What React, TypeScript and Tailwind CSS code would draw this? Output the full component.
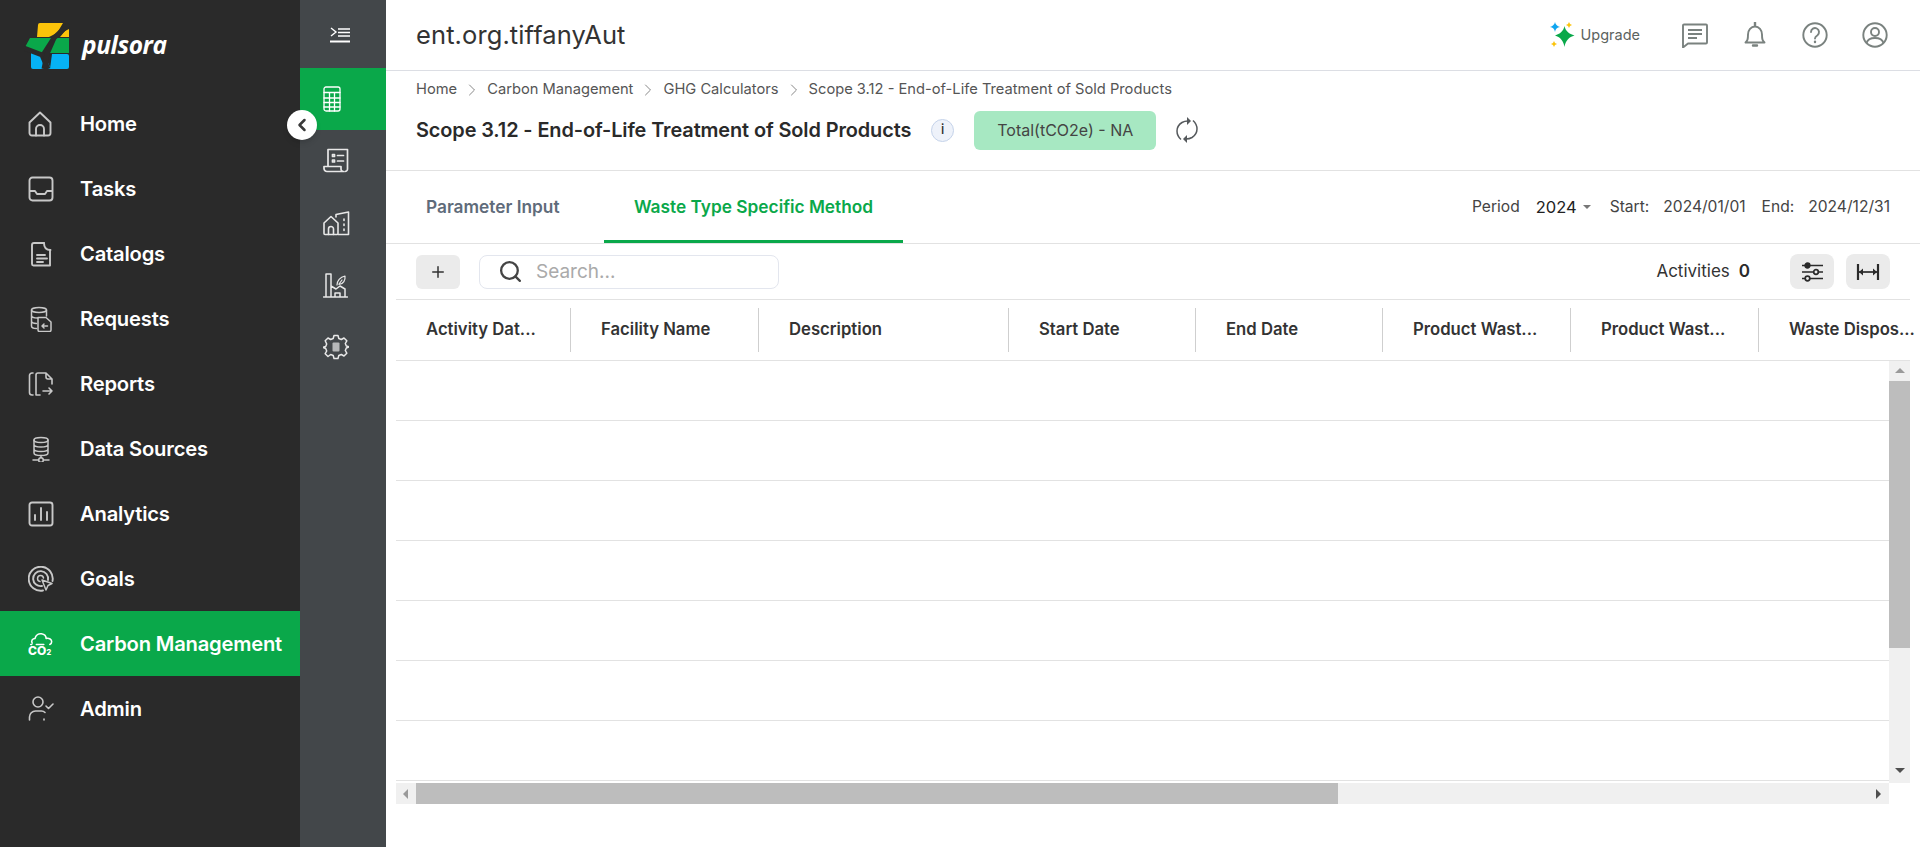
import React from 'react';
import { ChevronLeft, ChevronRight, Search, Plus } from 'lucide-react';

const S = { fill: 'none', stroke: 'currentColor', strokeWidth: 1.9, strokeLinecap: 'round', strokeLinejoin: 'round' } as const;

/* ─── Sidebar icons ─────────────────────────────────────── */
const HomeIcon = () => (
  <svg width="26" height="26" viewBox="0 0 26 26" {...S}>
    <path d="M1.500 11.500 12 1.500l10.500 10V22a2.500 2.500 0 0 1-2.500 2.500H4A2.500 2.500 0 0 1 1.500 22z" />
    <path d="M8 24.500V18a4 4 0 0 1 8 0v6.500" />
  </svg>
);
const InboxIcon = () => (
  <svg width="26" height="26" viewBox="0 0 26 26" {...S}>
    <rect x="1.500" y="1.500" width="23" height="23" rx="3" />
    <path d="M2 15h5l2 3h8l2-3h5" />
  </svg>
);
const FileIcon = () => (
  <svg width="26" height="26" viewBox="0 0 26 26" {...S}>
    <path d="M16 2H6a2 2 0 0 0-2 2v19a1.500 1.500 0 0 0 1.500 1.500H22M22 24.500V9z" />
    <path d="M16 2c0 4 2 7 6.500 7M9 14h8M9 17.500h10M9 21h6" />
  </svg>
);
const RequestIcon = () => (
  <svg width="26" height="26" viewBox="0 0 26 26" {...S} strokeWidth={1.500}>
    <ellipse cx="11" cy="4" rx="7.500" ry="2.500" />
    <path d="M3.500 4v16c0 1.500 2 2.500 5 2.500M18.500 4v6M3.500 9.500c0 1.500 3 2.500 6 2.500M3.500 15c0 1.500 2 2.300 5 2.500" />
    <path d="M10 11.500h8l5 4.500v8a1.500 1.500 0 0 1-1.500 1.500h-10A1.500 1.500 0 0 1 10 24z" />
    <path d="M19.500 20h-5M16 18l-2 2 2 2" />
  </svg>
);
const ReportIcon = () => (
  <svg width="26" height="26" viewBox="0 0 26 26" {...S} strokeWidth={1.600}>
    <path d="M5 2H4a2.500 2.500 0 0 0-2.500 2.500v17A2.500 2.500 0 0 0 4 24h1" />
    <path d="M8 24V4a2 2 0 0 1 2-2h8l6 6v5M18 2v4a2 2 0 0 0 2 2h4M8 24h4" />
    <path d="M15 20h9M21 17l3 3-3 3" />
  </svg>
);
const DatabaseIcon = () => (
  <svg width="26" height="26" viewBox="0 0 26 26" {...S} strokeWidth={1.500}>
    <ellipse cx="13" cy="4" rx="7" ry="2.500" />
    <path d="M6 4v13c0 1.500 3 2.500 7 2.500s7-1 7-2.500V4M6 8.500c0 1.500 3 2.500 7 2.500s7-1 7-2.500M6 13c0 1.500 3 2.500 7 2.500s7-1 7-2.500" />
    <path d="M13 19.500v2M5 24h5.500M15.500 24H21" />
    <circle cx="13" cy="24" r="2.300" />
  </svg>
);
const ChartIcon = () => (
  <svg width="26" height="26" viewBox="0 0 26 26" {...S}>
    <rect x="1.500" y="1.500" width="23" height="23" rx="2.500" />
    <path d="M7 19v-5M13 19V7M19 19v-8" />
  </svg>
);
const TargetIcon = () => (
  <svg width="26" height="26" viewBox="0 0 26 26" {...S}>
    <path d="M24.500 15A12 12 0 1 0 15 24.500" />
    <path d="M20 14a7.500 7.500 0 1 0-6 6" />
    <path d="M15.500 12a3 3 0 1 0-3.500 3.500" strokeWidth="1.500" />
    <path d="m14 14 10 3.500-4 2-2 4.500z" strokeWidth="1.500" />
  </svg>
);
const Co2Icon = () => (
  <svg width="28" height="26" viewBox="0 0 28 26" {...S} strokeWidth={1.700}>
    <path d="M4.500 12c-1.500-2.500.5-5 3-5 1-3.500 4-5.500 7-5 3 .5 5 2.500 5 5 3.500-.5 6 1 6 3.500 0 1.500-1 2.500-2 3" />
    <path d="M3 13.500h1M9 13.500h8" />
    <text x="0" y="25" fill="currentColor" stroke="none" fontSize="13" fontWeight="800" fontFamily="Inter, sans-serif">CO</text>
    <text x="20" y="25" fill="currentColor" stroke="none" fontSize="8" fontWeight="800" fontFamily="Inter, sans-serif">2</text>
  </svg>
);
const AdminIcon = () => (
  <svg width="26" height="26" viewBox="0 0 26 26" {...S} strokeWidth={1.600}>
    <circle cx="10" cy="6" r="5" />
    <path d="M1.500 24v-3a6 6 0 0 1 6-6h6a5 5 0 0 1 3.500 1.500M16 24v-1" />
    <path d="m18 10 2.500 2.500L25 8" />
  </svg>
);

/* ─── Rail icons ────────────────────────────────────────── */
const CalcIcon = () => (
  <svg width="18" height="26" viewBox="0 0 18 26" {...S} strokeWidth={1.300}>
    <rect x="1" y="1" width="16" height="24" rx="2" />
    <path d="M1 6.500h16M1 12h16M1 16.500h16M1 21h16M6.500 6.500V25M11.500 6.500V25" />
  </svg>
);
const LedgerIcon = () => (
  <svg width="26" height="26" viewBox="0 0 26 26" {...S} strokeWidth={1.700}>
    <path d="M5 18V1.500h19.500V21a2.500 2.500 0 0 1-2.500 2.500" />
    <path d="M1 18.500h17V21a2.500 2.500 0 0 0 2.500 2.500H4A3 3 0 0 1 1 20.500z" />
    <path d="M9.500 6.500h2v2h-2zM9.500 12h2v2h-2zM14.500 7.500h6M14.500 13h6" />
  </svg>
);
const BuildingIcon = () => (
  <svg width="27" height="25" viewBox="0 0 27 25" {...S} strokeWidth={1.600}>
    <path d="M1 12 8 5.500l7 6.500v10.500a1 1 0 0 1-1 1H2a1 1 0 0 1-1-1z" />
    <path d="M5.500 23.500V18a2.500 2.500 0 0 1 5 0v5.500" />
    <path d="M13 6V3.500L25.500 1v22.500H15" />
    <path d="M21 8v1.500M21 13v1.500M21 18v1.500" />
  </svg>
);
const FactoryIcon = () => (
  <svg width="25" height="25" viewBox="0 0 25 25" {...S} strokeWidth={1.500}>
    <path d="M3 23.500V1h5v22.500M0.500 24h24M8 13l5 3 4-3 5 3v8M12 24v-4h5v4" />
    <path d="M14 12c0-4 3-8 8-9 .5 4-1.500 8-6 8.500M16 11l3-4" strokeWidth="1.200" />
  </svg>
);
const GearIcon = () => (
  <svg width="26" height="26" viewBox="0 0 26 26" fill="none" stroke="currentColor" strokeWidth="1.500" strokeLinejoin="round">
    <path d="m11 1.500 4 0 .8 3 2.500 1 2.700-1.500 2.800 2.800-1.500 2.700 1 2.500 3 .8v0l-3 1.200-1 2.500 1.500 2.700-2.800 2.800-2.700-1.500-2.500 1-.8 3h-4l-.8-3-2.500-1L5 22.500l-2.800-2.800 1.500-2.700-1-2.500-3-1.200 3-.8 1-2.500L2.200 6.800 5 4l2.700 1.500 2.500-1z" />
    <rect x="9.500" y="8.500" width="7" height="9" rx="1" fill="currentColor" stroke="none" opacity="0.7" />
  </svg>
);
const CollapseIcon = () => (
  <svg width="20" height="16" viewBox="0 0 20 16" fill="none" stroke="currentColor" strokeWidth="1.800">
    <path d="M1 1l5 4-5 4" strokeWidth="1.400" />
    <path d="M8 2h12M8 5.500h12M8 9h12" strokeWidth="1.700" />
    <path d="M0 14.500h20" strokeWidth="2" />
  </svg>
);

/* ─── Header icons ──────────────────────────────────────── */
const SparkIcon = () => (
  <svg width="26" height="26" viewBox="0 0 26 26">
    <path d="M14.500 4 C15.500 9 19 12 24.500 13.500 C19 15 15.500 18.500 14.500 25 C13.500 18.500 10 15 5 13.500 C10 12 13.500 9 14.500 4Z" fill="#0aa84a" />
    <path d="M5 0 C5.500 2.500 7 4 10 5 C7 5.500 5.500 7 5 10 C4.500 7 3 5.500 0 5 C3 4 4.500 2.500 5 0Z" fill="#0ea5f0" />
    <path d="M19 0 L20 2 L22 3 L20 4 L19 6 L18 4 L16 3 L18 2Z" fill="#fbc30a" />
    <path d="M4 19 L5 21 L7 22 L5 23 L4 25 L3 23 L1 22 L3 21Z" fill="#fbc30a" />
  </svg>
);
const ChatIcon = () => (
  <svg width="26" height="26" viewBox="0 0 26 26" fill="none" stroke="#7a827f" strokeWidth="1.900" strokeLinejoin="round">
    <path d="M1 3.500a1 1 0 0 1 1-1h22a1 1 0 0 1 1 1v17a1 1 0 0 1-1 1H6L1 25.500z" />
    <path d="M6 8h14M6 12h14M6 16h9" />
  </svg>
);
const BellIcon = () => (
  <svg width="22" height="26" viewBox="0 0 22 26" fill="none" stroke="#7a827f" strokeWidth="1.900" strokeLinejoin="round">
    <path d="M1.500 20.500h19c-2-2-2.500-3-2.500-8 0-4.500-3-8-7-8s-7 3.500-7 8c0 5-.5 6-2.500 8z" />
    <path d="M11 .5v3M9 23.500h4" strokeLinecap="round" strokeWidth="2.400" />
  </svg>
);
const HelpIcon = () => (
  <svg width="26" height="26" viewBox="0 0 26 26" fill="none" stroke="#7a827f" strokeWidth="1.900" strokeLinecap="round">
    <circle cx="13" cy="13" r="11.700" />
    <path d="M9 10a4 4 0 1 1 6.500 3.200c-1.500 1-2.500 1.800-2.500 3.300" />
    <path d="M13 19.800v.2" strokeWidth="2.400" />
  </svg>
);
const UserIcon = () => (
  <svg width="26" height="26" viewBox="0 0 26 26" fill="none" stroke="#7a827f" strokeWidth="1.900">
    <circle cx="13" cy="13" r="11.700" />
    <circle cx="13" cy="10" r="4" />
    <path d="M4.500 21c1-3.500 4-5 8.500-5s7.500 1.500 8.500 5" />
  </svg>
);
const RefreshIcon = () => (
  <svg width="24" height="28" viewBox="0 0 24 28" fill="none" stroke="#55595c" strokeWidth="1.500">
    <path d="M6 23.500C1 19 0 11 7 6.500c2-1.200 4-1.500 6-1.500" />
    <path d="M18 4.500C23 9 24 17 17 21.500c-2 1.200-4 1.500-6 1.500" />
    <path d="M12 1v8l4-4zM12 27v-8l-4 4z" fill="#55595c" stroke="none" />
  </svg>
);
const SlidersIcon = () => (
  <svg width="22" height="20" viewBox="0 0 22 20" fill="none" stroke="#2a2a2a" strokeWidth="1.700">
    <path d="M1 3.500h21M1 10h21M1 16.500h21" />
    <circle cx="6.500" cy="3.500" r="2.300" fill="#2a2a2a" />
    <circle cx="15" cy="10" r="2.300" fill="#ebebeb" />
    <circle cx="6.500" cy="16.500" r="2.300" fill="#ebebeb" />
  </svg>
);
const FitIcon = () => (
  <svg width="24" height="20" viewBox="0 0 24 20" fill="none" stroke="#2a2a2a" strokeWidth="2">
    <path d="M2 2v16M22 2v16" strokeWidth="2.200" />
    <path d="M2 10h20" strokeWidth="1.700" />
    <path d="M3 10l4-3.500v7zM21 10l-4-3.500v7z" fill="#2a2a2a" stroke="none" />
  </svg>
);
const Logo = () => (
  <svg width="46" height="46" viewBox="0 0 46 46">
    <path d="M14 2a2 2 0 0 1 2-2h23l-6 10-8 4H13z" fill="#fbc30a" />
    <path d="M41 8l4-2v8H36z" fill="#fbc30a" />
    <path d="M6 15h21l-9 14-1 1L0 26z" fill="#0aa84a" />
    <path d="M31 15h14v15H24z" fill="#0aa84a" />
    <path d="M7 30h12l8 16H9a2 2 0 0 1-2-2z" fill="#06b2f5" />
    <path d="M28 31h15a2 2 0 0 1 2 2v11a2 2 0 0 1-2 2H26z" fill="#06b2f5" />
    <path d="M0 25l18 7 6 14" fill="none" stroke="#2a2a2a" strokeWidth="5" />
    <path d="M45 1 30 15l-7 16-3 15" fill="none" stroke="#2a2a2a" strokeWidth="5" />
  </svg>
);

/* ─── Data ──────────────────────────────────────────────── */
const navItems = [
  { label: 'Home', Icon: HomeIcon },
  { label: 'Tasks', Icon: InboxIcon },
  { label: 'Catalogs', Icon: FileIcon },
  { label: 'Requests', Icon: RequestIcon },
  { label: 'Reports', Icon: ReportIcon },
  { label: 'Data Sources', Icon: DatabaseIcon },
  { label: 'Analytics', Icon: ChartIcon },
  { label: 'Goals', Icon: TargetIcon },
  { label: 'Carbon Management', Icon: Co2Icon, active: true },
  { label: 'Admin', Icon: AdminIcon },
];

const railItems = [
  { Icon: CalcIcon, active: true },
  { Icon: LedgerIcon },
  { Icon: BuildingIcon },
  { Icon: FactoryIcon },
  { Icon: GearIcon },
];

const crumbs = ['Home', 'Carbon Management', 'GHG Calculators', 'Scope 3.12 - End-of-Life Treatment of Sold Products'];

const headerIcons = [ChatIcon, BellIcon, HelpIcon, UserIcon];

const columns = [
  { label: 'Activity Dat...', w: 'w-[175px]' },
  { label: 'Facility Name', w: 'w-[188px]' },
  { label: 'Description', w: 'w-[250px]' },
  { label: 'Start Date', w: 'w-[187px]' },
  { label: 'End Date', w: 'w-[187px]' },
  { label: 'Product Wast...', w: 'w-[188px]' },
  { label: 'Product Wast...', w: 'w-[188px]' },
  { label: 'Waste Dispos...', w: 'w-[151px]', last: true },
];

const rows = [0, 1, 2, 3, 4, 5, 6];

export default function App() {
  return (
    <div className="flex h-[847px] w-[1920px] overflow-hidden bg-white font-['Inter',sans-serif] text-[#2a2a2a]">
      {/* Menú principal */}
      <aside className="relative flex w-[300px] flex-none flex-col bg-[#2a2a2a] text-white">
        <div className="flex h-[91px] items-center gap-[12px] pl-[24px]">
          <Logo />
          <span className="font-['Open_Sans',sans-serif] text-[24.500px] font-bold italic leading-none tracking-[-0.4px]">pulsora</span>
        </div>
        <nav className="flex flex-col">
          {navItems.map(({ label, Icon, active }) => (
            <div
              key={label}
              className={`flex h-[65px] items-center gap-[26px] pl-[28px] pt-[1px] ${active ? 'bg-[#0aa84a]' : ''}`}
            >
              <span className={`flex w-[26px] justify-center ${active ? 'text-white' : 'text-[#c8c8c8]'}`}>
                <Icon />
              </span>
              <span className="text-[20.200px] font-semibold tracking-[-0.2px]">{label}</span>
            </div>
          ))}
        </nav>
        <button className="absolute left-[287px] top-[110px] z-10 flex h-[30px] w-[30px] items-center justify-center rounded-full bg-white text-[#3a3a3a] shadow-md">
          <ChevronLeft size={20} strokeWidth={3} />
        </button>
      </aside>

      {/* Barra secundaria */}
      <div className="flex w-[86px] flex-none flex-col bg-[#43474a] text-white">
        <div className="flex h-[68px] items-center pl-[30px] pt-[2px]">
          <CollapseIcon />
        </div>
        {railItems.map(({ Icon, active }, i) => (
          <div key={i} className={`flex h-[62px] items-center pl-[23px] ${active ? 'bg-[#0aa84a]' : 'text-[#e8e8e8]'}`}>
            <Icon />
          </div>
        ))}
      </div>

      {/* Contenido */}
      <main className="flex min-w-0 flex-1 flex-col">
        <header className="flex h-[71px] flex-none items-center justify-between border-b border-[#dcdee4] pl-[30px] pr-[15px]">
          <h1 className="text-[25.500px] font-normal leading-none tracking-[0.1px] text-[#333]">ent.org.tiffanyAut</h1>
          <div className="flex items-center">
            <SparkIcon />
            <span className="ml-[5px] mr-[25px] text-[14.500px] text-[#5c6360]">Upgrade</span>
            {headerIcons.map((Icon, i) => (
              <span key={i} className="flex w-[60px] justify-center">
                <Icon />
              </span>
            ))}
          </div>
        </header>

        <section className="h-[100px] flex-none border-b border-[#e2e2e2] pl-[30px]">
          <div className="flex h-[34px] items-center pt-[3px] text-[14.700px] text-[#555]">
            {crumbs.map((c, i) => (
              <React.Fragment key={c}>
                {i > 0 && <ChevronRight size={20} strokeWidth={1.200} className="mx-[5px] text-[#888]" />}
                <span>{c}</span>
              </React.Fragment>
            ))}
          </div>
          <div className="flex h-[50px] items-center">
            <h2 className="pt-[1px] text-[19.900px] font-semibold tracking-[-0.1px]">Scope 3.12 - End-of-Life Treatment of Sold Products</h2>
            <span className="ml-[20px] flex h-[23px] w-[23px] items-center justify-center rounded-full border border-[#c5d3ea] bg-[#eef2fa] text-[13px] font-medium">i</span>
            <span className="ml-[20px] flex h-[39px] w-[182px] items-center justify-center rounded-[6px] bg-[#a7e8c2] text-[16px] text-[#444]">Total(tCO2e) - NA</span>
            <span className="ml-[19px] flex"><RefreshIcon /></span>
          </div>
        </section>

        <section className="flex h-[73px] flex-none items-stretch justify-between border-b border-[#e2e2e2] pl-[10px] pr-[30px]">
          <div className="flex text-[17.300px] font-semibold">
            <div className="flex w-[208px] items-center pl-[30px] text-[#5f6b7a]">Parameter Input</div>
            <div className="flex w-[299px] items-center justify-center border-b-[3px] border-[#0aa84a] pt-[3px] text-[#0aa84a]">Waste Type Specific Method</div>
          </div>
          <div className="flex items-center text-[15.600px] text-[#444]">
            <span>Period</span>
            <span className="ml-[16px] text-[16.500px] text-[#222]">2024</span>
            <span className="ml-[6px] mr-[19px] h-0 w-0 border-x-[4px] border-t-[4px] border-x-transparent border-t-[#777]" />
            <span>Start:</span>
            <span className="ml-[14px]">2024/01/01</span>
            <span className="ml-[16px]">End:</span>
            <span className="ml-[14px]">2024/12/31</span>
          </div>
        </section>

        <section className="flex h-[55px] flex-none items-center justify-between pl-[30px] pr-[30px]">
          <div className="flex items-center gap-[19px]">
            <button className="flex h-[34px] w-[44px] items-center justify-center rounded-[6px] bg-[#ebebeb] text-[#333]">
              <Plus size={18} strokeWidth={2} />
            </button>
            <div className="flex h-[34px] w-[300px] items-center gap-[13px] rounded-[8px] border border-[#e3e6ee] pl-[18px]">
              <Search size={25} strokeWidth={2.200} className="text-[#444]" />
              <span className="pt-[2px] text-[19px] text-[#aaa]">Search...</span>
            </div>
          </div>
          <div className="flex items-center">
            <span className="text-[17px] text-[#333]">Activities</span>
            <span className="ml-[9px] text-[17px] font-semibold">0</span>
            <button className="ml-[40px] flex h-[35px] w-[44px] items-center justify-center rounded-[8px] bg-[#ebebeb]"><SlidersIcon /></button>
            <button className="ml-[12px] flex h-[35px] w-[44px] items-center justify-center rounded-[8px] bg-[#ebebeb]"><FitIcon /></button>
          </div>
        </section>

        {/* Tabla */}
        <section className="mx-[10px] flex flex-none flex-col">
          <div className="flex h-[62px] items-center border-y border-[#e2e2e2] text-[16.700px] font-semibold text-[#333]">
            {columns.map(({ label, w, last }, i) => (
              <div key={i} className={`flex h-[44px] items-center whitespace-nowrap pl-[30px] ${w} ${last ? '' : 'border-r border-[#cfcfcf]'}`}>
                {label}
              </div>
            ))}
          </div>
          <div className="flex h-[422px]">
            <div className="flex-1">
              {rows.map((r) => (
                <div key={r} className="h-[60px] border-b border-[#e2e2e2]" />
              ))}
            </div>
            <div className="flex w-[21px] flex-none flex-col items-center bg-[#f0f0f0]">
              <span className="mt-[7px] h-0 w-0 border-x-[5px] border-b-[5px] border-x-transparent border-b-[#9a9a9a]" />
              <div className="mt-[8px] h-[267px] w-full bg-[#bdbdbd]" />
              <span className="mt-auto mb-[10px] h-0 w-0 border-x-[5px] border-t-[5px] border-x-transparent border-t-[#505050]" />
            </div>
          </div>
          <div className="flex h-[21px] w-[1493px] items-center bg-[#f0f0f0]">
            <span className="ml-[7px] h-0 w-0 border-y-[5px] border-r-[5px] border-y-transparent border-r-[#9a9a9a]" />
            <div className="ml-[8px] h-full w-[922px] bg-[#bdbdbd]" />
            <span className="ml-auto mr-[8px] h-0 w-0 border-y-[5px] border-l-[5px] border-y-transparent border-l-[#505050]" />
          </div>
        </section>
      </main>
    </div>
  );
}
